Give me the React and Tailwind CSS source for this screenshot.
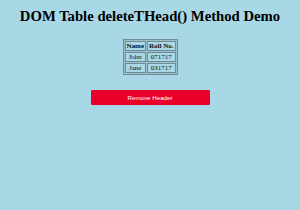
export default function App() {
    return (
        <div className="min-h-[210px] w-[300px] bg-[#a8d8e6] pt-[7px] text-center font-['Liberation_Serif',serif] text-black">
            <h1 className="whitespace-nowrap text-[14.7px] font-bold leading-[18px]">DOM Table deleteTHead() Method Demo</h1>

            <div className="mt-[14px] flex justify-center">
                <table className="border border-[#6f8d99] bg-[#9dbfcc] text-[7px] leading-[8px] text-[#111] [border-collapse:separate] [border-spacing:1px]">
                    <thead>
                        <tr>
                            <th className="border border-[#6f8d99] bg-[#a8d8e6] px-[1px] py-0">Name</th>
                            <th className="border border-[#6f8d99] bg-[#a8d8e6] px-[1px] py-0">Roll No.</th>
                        </tr>
                    </thead>
                    <tbody>
                        <tr>
                            <td className="border border-[#6f8d99] bg-[#a8d8e6] px-[1px] py-0">John</td>
                            <td className="border border-[#6f8d99] bg-[#a8d8e6] px-[1px] py-0">071717</td>
                        </tr>
                        <tr>
                            <td className="border border-[#6f8d99] bg-[#a8d8e6] px-[1px] py-0">Jane</td>
                            <td className="border border-[#6f8d99] bg-[#a8d8e6] px-[1px] py-0">031717</td>
                        </tr>
                    </tbody>
                </table>
            </div>

            <div className="mt-[15px] flex justify-center">
                <button className="h-[15px] w-[119px] rounded-[1px] bg-[#e8002b] font-['Liberation_Sans',sans-serif] text-[6.2px] leading-[15px] text-white">
                    Remove Header
                </button>
            </div>
        </div>
    );
}
